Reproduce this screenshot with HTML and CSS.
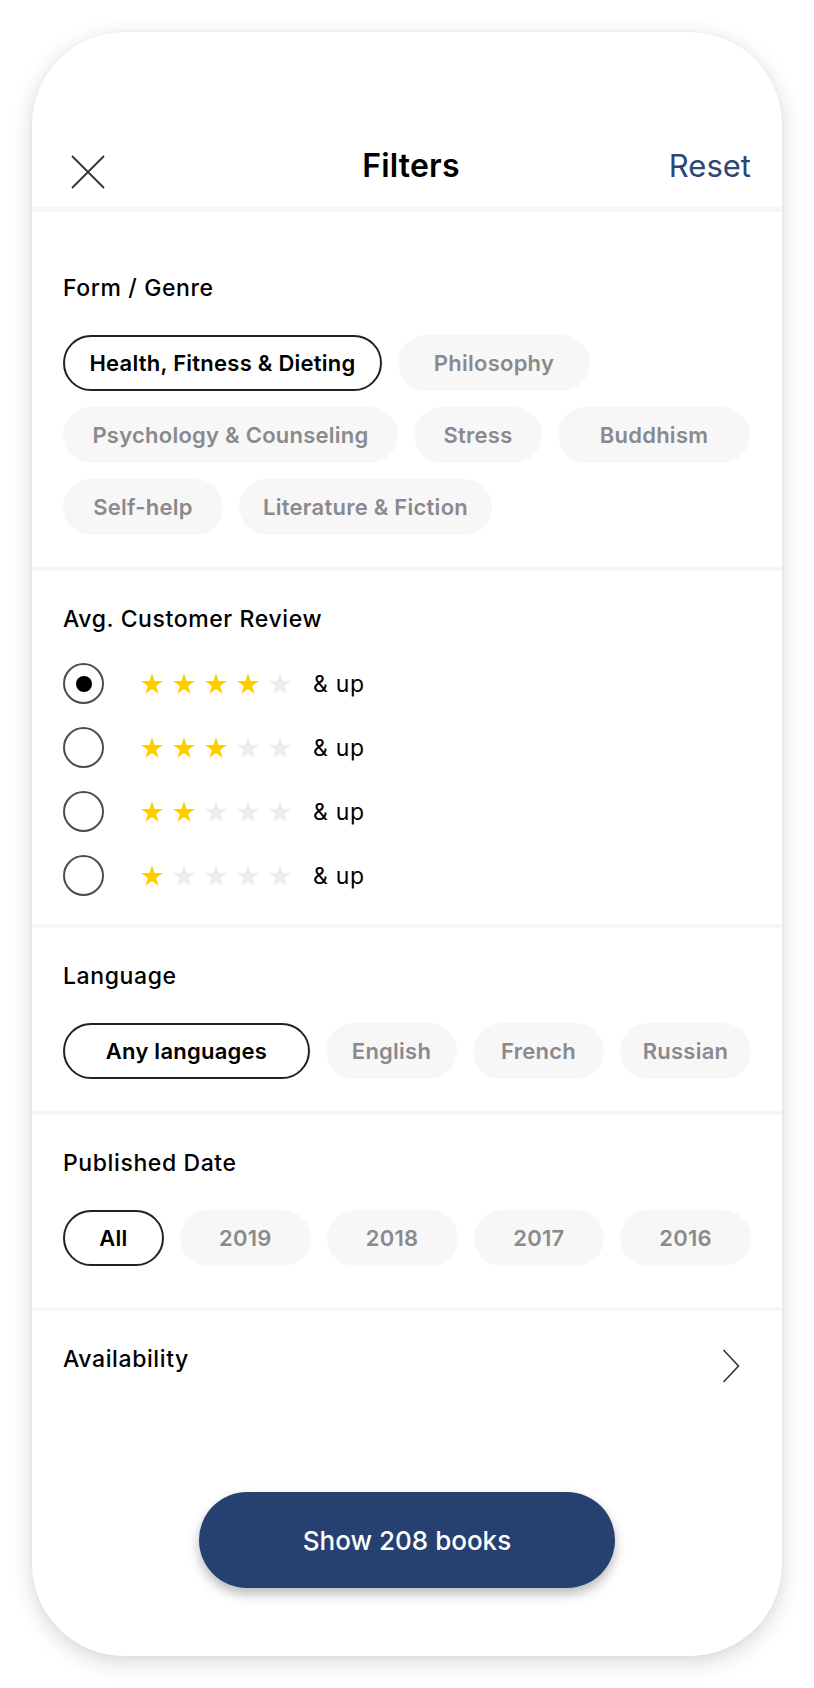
FILE: index.html
```html
<!DOCTYPE html>
<html lang="en">
<head>
<meta charset="utf-8">
<title>Filters</title>
<link rel="stylesheet" href="styles.css">
</head>
<body>
<svg class="defs" width="0" height="0" aria-hidden="true">
  <symbol id="star" viewBox="0 0 24 24">
    <polygon points="12,1.1 14.58,9.05 22.94,9.05 16.18,13.96 18.76,21.9 12,16.99 5.24,21.9 7.82,13.96 1.06,9.05 9.42,9.05"/>
  </symbol>
</svg>
<div class="phone">
  <header class="topbar">
    <button class="close" aria-label="Close">
      <svg width="34" height="34" viewBox="0 0 34 34"><path d="M1 1L33 33M33 1L1 33" stroke="#333" stroke-width="1.8" fill="none"/></svg>
    </button>
    <h1 class="title">Filters</h1>
    <button class="reset">Reset</button>
  </header>

  <section class="section section--first">
    <h2 class="section-title">Form / Genre</h2>
    <div class="chips">
      <span class="chip chip--on w-health">Health, Fitness &amp; Dieting</span>
      <span class="chip w-philosophy">Philosophy</span>
      <span class="chip w-psych">Psychology &amp; Counseling</span>
      <span class="chip w-stress">Stress</span>
      <span class="chip w-buddhism">Buddhism</span>
      <span class="chip w-selfhelp">Self-help</span>
      <span class="chip w-lit">Literature &amp; Fiction</span>
    </div>
  </section>

  <section class="section section--review">
    <h2 class="section-title section-title--review">Avg. Customer Review</h2>
    <ul class="ratings">
      <li class="rating">
        <span class="radio radio--on"></span>
        <span class="stars">
          <svg class="star on"><use href="#star"/></svg><svg class="star on"><use href="#star"/></svg><svg class="star on"><use href="#star"/></svg><svg class="star on"><use href="#star"/></svg><svg class="star"><use href="#star"/></svg>
        </span>
        <span class="up">&amp; up</span>
      </li>
      <li class="rating">
        <span class="radio"></span>
        <span class="stars">
          <svg class="star on"><use href="#star"/></svg><svg class="star on"><use href="#star"/></svg><svg class="star on"><use href="#star"/></svg><svg class="star"><use href="#star"/></svg><svg class="star"><use href="#star"/></svg>
        </span>
        <span class="up">&amp; up</span>
      </li>
      <li class="rating">
        <span class="radio"></span>
        <span class="stars">
          <svg class="star on"><use href="#star"/></svg><svg class="star on"><use href="#star"/></svg><svg class="star"><use href="#star"/></svg><svg class="star"><use href="#star"/></svg><svg class="star"><use href="#star"/></svg>
        </span>
        <span class="up">&amp; up</span>
      </li>
      <li class="rating">
        <span class="radio"></span>
        <span class="stars">
          <svg class="star on"><use href="#star"/></svg><svg class="star"><use href="#star"/></svg><svg class="star"><use href="#star"/></svg><svg class="star"><use href="#star"/></svg><svg class="star"><use href="#star"/></svg>
        </span>
        <span class="up">&amp; up</span>
      </li>
    </ul>
  </section>

  <section class="section">
    <h2 class="section-title">Language</h2>
    <div class="chip-grid chip-grid--lang">
      <span class="chip chip--on">Any languages</span>
      <span class="chip">English</span>
      <span class="chip">French</span>
      <span class="chip">Russian</span>
    </div>
  </section>

  <section class="section section--date">
    <h2 class="section-title">Published Date</h2>
    <div class="chip-grid chip-grid--date">
      <span class="chip chip--on">All</span>
      <span class="chip">2019</span>
      <span class="chip">2018</span>
      <span class="chip">2017</span>
      <span class="chip">2016</span>
    </div>
  </section>

  <section class="section section--last">
    <div class="link-row">
      <h2 class="section-title section-title--flat">Availability</h2>
      <svg class="chevron" width="18" height="34" viewBox="0 0 18 34"><path d="M1.5 1L16.5 17L1.5 33" stroke="#333" stroke-width="1.6" fill="none"/></svg>
    </div>
  </section>

  <footer class="footer">
    <button class="show">Show 208 books</button>
  </footer>
</div>
</body>
</html>
```

FILE: styles.css
```css
* { box-sizing: border-box; }

body {
  margin: 0;
  background: #fff;
  font-family: Inter, "Noto Sans", "Liberation Sans", sans-serif;
  color: #000;
}

.defs { position: absolute; width: 0; height: 0; overflow: hidden; }

.phone {
  width: 750px;
  height: 1624px;
  margin: 32px;
  background: #fff;
  border-radius: 92px;
  box-shadow: 0 6px 22px rgba(0, 0, 0, 0.16), 0 0 3px rgba(0, 0, 0, 0.06);
  display: flex;
  flex-direction: column;
  overflow: hidden;
}

/* header */
.topbar {
  height: 180px;
  padding: 0 31px 23px 39px;
  border-bottom: 5px solid #f6f6f6;
  display: grid;
  grid-template-columns: 1fr auto 1fr;
  align-items: end;
  align-content: end;
}

.close {
  justify-self: start;
  align-self: end;
  margin-bottom: -5px;
  padding: 0;
  border: 0;
  background: none;
  width: 34px;
  height: 34px;
  display: block;
}
.close svg { display: block; }

.title {
  margin: 0;
  font-size: 32px;
  line-height: 36px;
  font-weight: 600;
  letter-spacing: 0.2px;
}

.reset {
  justify-self: end;
  padding: 0;
  border: 0;
  background: none;
  font-family: inherit;
  font-size: 31px;
  line-height: 36px;
  font-weight: 400;
  color: #2a4776;
}

/* sections */
.section {
  padding: 34px 31px 32px;
  border-bottom: 4px solid #f6f6f6;
}
.section--first { padding-top: 62px; }
.section--review { padding-bottom: 28px; }
.section--date { padding-bottom: 41px; }
.section--last { border-bottom: 0; }

.section-title {
  margin: 0 0 33px;
  font-size: 23px;
  line-height: 28px;
  font-weight: 500;
  letter-spacing: 0.6px;
}
.section-title--review { margin-bottom: 30px; }
.section-title--flat { margin: 0; }

/* chips */
.chips {
  display: flex;
  flex-wrap: wrap;
  gap: 16px;
}

.chip {
  height: 56px;
  border-radius: 28px;
  background: #f7f7f7;
  color: #8a8a8e;
  font-size: 22px;
  font-weight: 600;
  letter-spacing: 0.25px;
  display: flex;
  align-items: center;
  justify-content: center;
  white-space: nowrap;
}
.chip--on {
  background: #fff;
  border: 2px solid #222;
  color: #000;
}

.w-health { width: 319px; }
.w-philosophy { width: 192px; }
.w-psych { width: 335px; }
.w-stress { width: 128px; }
.w-buddhism { width: 192px; }
.w-selfhelp { width: 160px; }
.w-lit { width: 253px; }

.chip-grid {
  display: grid;
  gap: 16px;
}
.chip-grid--lang { grid-template-columns: 247px repeat(3, 1fr); }
.chip-grid--date { grid-template-columns: 101px repeat(4, 1fr); }

/* ratings */
.ratings {
  list-style: none;
  margin: 0;
  padding: 0;
  display: flex;
  flex-direction: column;
  gap: 23px;
}

.rating {
  display: flex;
  align-items: center;
  height: 41px;
}

.radio {
  width: 41px;
  height: 41px;
  border-radius: 50%;
  border: 2px solid #4d4d4d;
  display: flex;
  align-items: center;
  justify-content: center;
  margin-right: 36px;
  flex: none;
}
.radio--on::after {
  content: "";
  width: 16px;
  height: 16px;
  border-radius: 50%;
  background: #000;
}

.stars {
  display: flex;
  gap: 8px;
  margin-right: 21px;
}
.star {
  width: 24px;
  height: 24px;
  fill: #ececec;
  display: block;
}
.star.on { fill: #ffcc00; }

.up {
  font-size: 23px;
  line-height: 28px;
  font-weight: 400;
  letter-spacing: 0.7px;
}

/* availability */
.link-row {
  display: flex;
  justify-content: space-between;
  align-items: flex-start;
}
.chevron {
  margin-top: 4px;
  margin-right: 11px;
  display: block;
}

/* footer */
.footer {
  margin-top: auto;
  display: flex;
  justify-content: center;
  padding-bottom: 68px;
}
.show {
  width: 416px;
  height: 96px;
  border: 0;
  border-radius: 48px;
  background: #26416f;
  color: #fff;
  font-family: inherit;
  font-size: 26px;
  font-weight: 500;
  box-shadow: 0 6px 12px rgba(0, 0, 0, 0.28);
}
```
